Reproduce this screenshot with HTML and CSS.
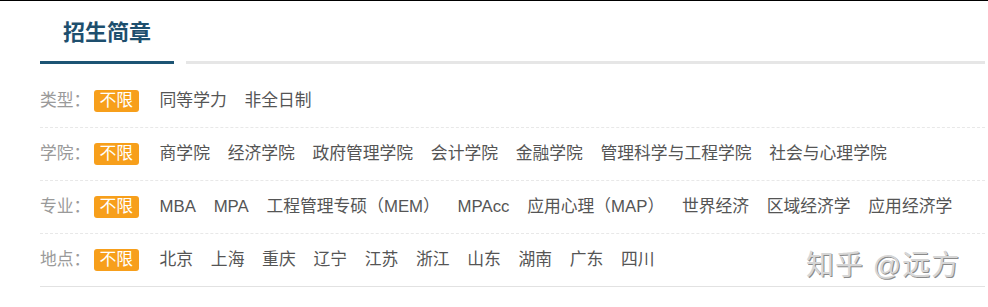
FILE: index.html
```html
<!DOCTYPE html>
<html lang="zh-CN">
<head>
    <meta charset="UTF-8">
    <meta name="viewport" content="width=device-width, initial-scale=1.0">
    <title>招生简章</title>
    <link rel="stylesheet" href="styles.css">
</head>
<body>
    <div class="page">
        <div class="tabs">
            <div class="tab active">招生简章</div>
            <div class="tab-rest"></div>
        </div>

        <div class="filters">
            <div class="row">
                <span class="label">类型：</span>
                <span class="badge">不限</span>
                <span class="item">同等学力</span>
                <span class="item">非全日制</span>
            </div>
            <div class="row">
                <span class="label">学院：</span>
                <span class="badge">不限</span>
                <span class="item">商学院</span>
                <span class="item">经济学院</span>
                <span class="item">政府管理学院</span>
                <span class="item">会计学院</span>
                <span class="item">金融学院</span>
                <span class="item">管理科学与工程学院</span>
                <span class="item">社会与心理学院</span>
            </div>
            <div class="row">
                <span class="label">专业：</span>
                <span class="badge">不限</span>
                <span class="item">MBA</span>
                <span class="item">MPA</span>
                <span class="item">工程管理专硕（MEM）</span>
                <span class="item">MPAcc</span>
                <span class="item">应用心理（MAP）</span>
                <span class="item">世界经济</span>
                <span class="item">区域经济学</span>
                <span class="item">应用经济学</span>
            </div>
            <div class="row last">
                <span class="label">地点：</span>
                <span class="badge">不限</span>
                <span class="item">北京</span>
                <span class="item">上海</span>
                <span class="item">重庆</span>
                <span class="item">辽宁</span>
                <span class="item">江苏</span>
                <span class="item">浙江</span>
                <span class="item">山东</span>
                <span class="item">湖南</span>
                <span class="item">广东</span>
                <span class="item">四川</span>
            </div>
        </div>

        <div class="watermark">知乎 @远方</div>
    </div>
</body>
</html>
```

FILE: styles.css
```css
body {
    margin: 0;
    font-family: "Liberation Sans", "Noto Sans CJK SC", sans-serif;
    background: #ffffff;
    border-top: 1px solid #000000;
}

.page {
    position: relative;
    width: 945px;
    margin-left: 40px;
    height: 306px;
}

/* header tabs */
.tabs {
    display: flex;
    align-items: flex-end;
}

.tab {
    width: 134px;
    padding-top: 17px;
    height: 43px;
    line-height: 30px;
    text-align: center;
    font-size: 22px;
    font-weight: bold;
    color: #1e4f6e;
    border-bottom: 3px solid #1d5474;
}

.tab-rest {
    flex: 1;
    margin-left: 12px;
    border-bottom: 3px solid #e6e6e6;
}

/* filter rows */
.filters {
    margin-top: 11px;
}

.row {
    display: flex;
    align-items: center;
    height: 52px;
    border-bottom: 1px dashed #e8e8e8;
    font-size: 16.8px;
    line-height: 22px;
}

.row.last {
    border-bottom: 1px solid #e2e2e2;
}

.label {
    width: 54px;
    color: #9a9a9a;
}

.badge {
    height: 22px;
    padding: 0 5.5px;
    margin-right: 21px;
    border-radius: 3px;
    background-color: #f79f1b;
    color: #ffffff;
}

.item {
    margin-right: 17.7px;
    color: #555555;
    white-space: nowrap;
}

.watermark {
    position: absolute;
    left: 766px;
    top: 242px;
    font-size: 28px;
    color: #d6d6d6;
    text-shadow: 1px 1px 0 #8a8a8a;
    letter-spacing: 1px;
}
```
